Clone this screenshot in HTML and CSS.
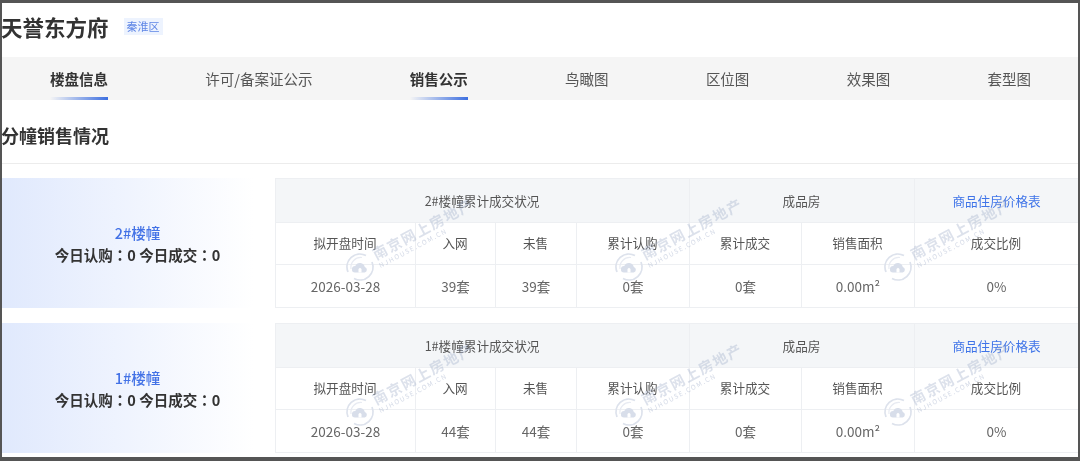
FILE: index.html
```html
<!DOCTYPE html>
<html lang="zh-CN">
<head>
    <meta charset="UTF-8">
    <meta name="viewport" content="width=device-width, initial-scale=1.0">
    <title>天誉东方府</title>
    <link rel="stylesheet" href="styles.css">
</head>
<body>
<div class="page">
    <!-- 楼盘标题 -->
    <div class="head">
        <h1>天誉东方府</h1>
        <span class="tag">秦淮区</span>
    </div>

    <!-- 导航 -->
    <div class="nav">
        <a class="active">楼盘信息</a>
        <a>许可/备案证公示</a>
        <a class="active">销售公示</a>
        <a>鸟瞰图</a>
        <a>区位图</a>
        <a>效果图</a>
        <a>套型图</a>
    </div>

    <h2>分幢销售情况</h2>

    <!-- 2#楼幢 -->
    <div class="row">
        <div class="side">
            <div class="name">2#楼幢</div>
            <div class="today">今日认购<span class="colon" lang="zh-TW">：</span>0 今日成交<span class="colon" lang="zh-TW">：</span>0</div>
        </div>
        <div class="grid">
            <div class="th span4">2#楼幢累计成交状况</div>
            <div class="th span2">成品房</div>
            <div class="th link">商品住房价格表</div>
            <div class="td">拟开盘时间</div>
            <div class="td">入网</div>
            <div class="td">未售</div>
            <div class="td">累计认购</div>
            <div class="td">累计成交</div>
            <div class="td">销售面积</div>
            <div class="td">成交比例</div>
            <div class="td val">2026-03-28</div>
            <div class="td val">39套</div>
            <div class="td val">39套</div>
            <div class="td val">0套</div>
            <div class="td val">0套</div>
            <div class="td val">0.00m²</div>
            <div class="td val">0%</div>
        </div>
        <div class="marks">
            <div class="mark"><svg class="logo" viewBox="0 0 30 30"><use href="#wm"/></svg><div class="mark-text"><b>南京网上房地产</b><i>NJHOUSE.COM.CN</i></div></div>
            <div class="mark"><svg class="logo" viewBox="0 0 30 30"><use href="#wm"/></svg><div class="mark-text"><b>南京网上房地产</b><i>NJHOUSE.COM.CN</i></div></div>
            <div class="mark"><svg class="logo" viewBox="0 0 30 30"><use href="#wm"/></svg><div class="mark-text"><b>南京网上房地产</b><i>NJHOUSE.COM.CN</i></div></div>
        </div>
    </div>

    <!-- 1#楼幢 -->
    <div class="row">
        <div class="side">
            <div class="name">1#楼幢</div>
            <div class="today">今日认购<span class="colon" lang="zh-TW">：</span>0 今日成交<span class="colon" lang="zh-TW">：</span>0</div>
        </div>
        <div class="grid">
            <div class="th span4">1#楼幢累计成交状况</div>
            <div class="th span2">成品房</div>
            <div class="th link">商品住房价格表</div>
            <div class="td">拟开盘时间</div>
            <div class="td">入网</div>
            <div class="td">未售</div>
            <div class="td">累计认购</div>
            <div class="td">累计成交</div>
            <div class="td">销售面积</div>
            <div class="td">成交比例</div>
            <div class="td val">2026-03-28</div>
            <div class="td val">44套</div>
            <div class="td val">44套</div>
            <div class="td val">0套</div>
            <div class="td val">0套</div>
            <div class="td val">0.00m²</div>
            <div class="td val">0%</div>
        </div>
        <div class="marks">
            <div class="mark"><svg class="logo" viewBox="0 0 30 30"><use href="#wm"/></svg><div class="mark-text"><b>南京网上房地产</b><i>NJHOUSE.COM.CN</i></div></div>
            <div class="mark"><svg class="logo" viewBox="0 0 30 30"><use href="#wm"/></svg><div class="mark-text"><b>南京网上房地产</b><i>NJHOUSE.COM.CN</i></div></div>
            <div class="mark"><svg class="logo" viewBox="0 0 30 30"><use href="#wm"/></svg><div class="mark-text"><b>南京网上房地产</b><i>NJHOUSE.COM.CN</i></div></div>
        </div>
    </div>
</div>

<!-- 水印图标 -->
<svg class="defs" width="0" height="0">
    <symbol id="wm" viewBox="0 0 30 30">
        <path d="M3 20A13 13 0 0 1 21 3.500" fill="none" stroke="#dde2ec" stroke-width="1.800"/>
        <path d="M27 10A13 13 0 0 1 9 26.500" fill="none" stroke="#dde2ec" stroke-width="1.800"/>
        <path d="M6 17A10 10 0 0 1 17 5.500" fill="none" stroke="#e8ebf2" stroke-width="1.200"/>
        <path d="M10 20.500a3.200 3.200 0 0 1 .3-6.400 5 5 0 0 1 9.500 1 2.800 2.800 0 0 1 0 5.400z" fill="#d8deea"/>
        <path d="M13.500 20.500v-3.500l1.500-1.200 1.500 1.200v3.500z" fill="#fff"/>
    </symbol>
</svg>
</body>
</html>
```

FILE: styles.css
```css
/* 外框 */
body {
    margin: 0;
    height: 461px;
    overflow: hidden;
    background: #555;
    font-family: "Noto Sans CJK SC", "Noto Sans", sans-serif;
    color: #555;
}

.page {
    margin: 3px 2px 0;
    height: 454px;
    overflow: hidden;
    background: #fff;
    filter: blur(.3px);
}

.defs {
    position: absolute;
}

/* 标题 */
.head {
    display: flex;
    align-items: center;
    gap: 15px;
    height: 54px;
    padding-bottom: 8px;
    box-sizing: border-box;
}

h1 {
    margin: 0 0 0 -1px;
    font-size: 21.500px;
    font-weight: 700;
    color: #333;
    white-space: nowrap;
}

.tag {
    padding: 0 3px;
    height: 17px;
    line-height: 17px;
    font-size: 11px;
    color: #5f86e6;
    background: #edf3fe;
}

/* 导航 */
.nav {
    display: flex;
    gap: 97.300px;
    padding-left: 48px;
    height: 43px;
    background: #f5f5f5;
}

.nav a {
    position: relative;
    line-height: 43px;
    font-size: 14.500px;
    color: #555;
    white-space: nowrap;
}

.nav a.active {
    font-weight: 700;
    color: #333;
}

.nav a.active::after {
    content: "";
    position: absolute;
    left: 0;
    right: 0;
    bottom: 0;
    height: 3px;
    background: linear-gradient(90deg, rgba(61, 111, 224, 0), #3d6fe0);
}

h2 {
    margin: 0 0 14px;
    height: 63px;
    line-height: 70px;
    font-size: 18px;
    font-weight: 700;
    color: #333;
    text-indent: -1px;
    border-bottom: 1px solid #ececec;
}

/* 每一幢 */
.row {
    position: relative;
    display: flex;
    height: 130px;
    margin-bottom: 15px;
}

.side {
    flex: 0 0 273px;
    display: flex;
    flex-direction: column;
    justify-content: center;
    align-items: center;
    padding-right: 2px;
    box-sizing: border-box;
    background: linear-gradient(90deg, #e0e9fd, #fff 92%);
}

.name {
    margin-top: 1px;
    font-size: 14.500px;
    font-weight: 500;
    line-height: 22px;
    color: #4372e6;
}

.today {
    font-size: 14.500px;
    font-weight: 700;
    line-height: 22px;
    color: #333;
}

.colon {
    font-family: "Noto Sans CJK TC", sans-serif;
}

.grid {
    flex: 1;
    display: grid;
    grid-template-columns: 140px 80px 81px 113px 112px 113px 1fr;
    grid-template-rows: 44px 42px 43px;
    border: 1px solid #edeff2;
    border-width: 1px 0 1px 1px;
    box-sizing: border-box;
    font-size: 12.600px;
}

.th,
.td {
    display: flex;
    align-items: center;
    justify-content: center;
    padding-right: 1px;
    border-right: 1px solid #edeff2;
    border-bottom: 1px solid #edeff2;
    box-sizing: border-box;
}

.td {
    padding-bottom: 2px;
}

/* 最后一列没有右边线 */
.grid > :nth-child(7n+3) {
    border-right: 0;
}

.th {
    background: #f4f6f8;
    color: #555;
}

.span4 {
    grid-column: span 4;
}

.span2 {
    grid-column: span 2;
}

.th.link {
    padding-right: 0;
    color: #3f74e8;
}

.val {
    padding-right: 0;
    font-size: 13.500px;
    color: #666;
    border-bottom: 0;
}

/* 水印 */
.marks {
    position: absolute;
    left: 343px;
    top: 51px;
    display: flex;
    gap: 131px;
    pointer-events: none;
}

.mark {
    position: relative;
    width: 138px;
    height: 60px;
}

.logo {
    position: absolute;
    left: 0;
    top: 23px;
    width: 30px;
    height: 30px;
}

.mark-text {
    position: absolute;
    left: 36px;
    top: 15px;
    transform: rotate(-28deg);
    transform-origin: left bottom;
    white-space: nowrap;
}

.mark-text b {
    display: block;
    font-size: 14.500px;
    line-height: 17px;
    letter-spacing: 1.500px;
    color: rgba(150, 165, 195, .33);
}

.mark-text i {
    display: block;
    font-style: normal;
    font-size: 6.500px;
    line-height: 8px;
    letter-spacing: 1.400px;
    color: rgba(150, 165, 195, .42);
}
```
